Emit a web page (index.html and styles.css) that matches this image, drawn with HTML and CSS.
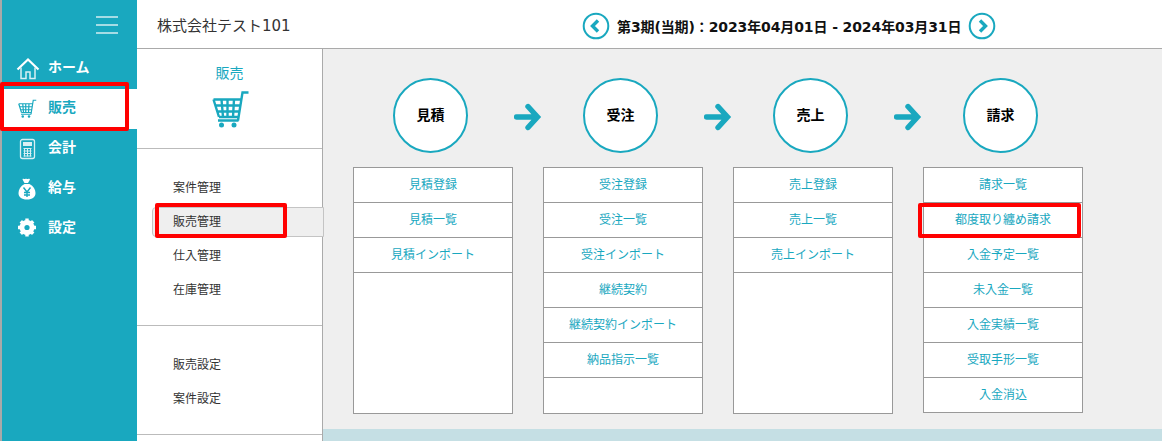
FILE: index.html
```html
<!DOCTYPE html>
<html lang="ja">
<head>
<meta charset="utf-8">
<title>販売</title>
<link rel="stylesheet" href="styles.css">
</head>
<body>
<div class="app">
  <aside class="sidebar">
    <div class="burger"><span></span><span></span><span></span></div>
    <nav class="mainnav">
      <a class="mainitem">
        <svg class="mi" viewBox="0 0 24 24" width="24" height="24"><path d="M1.500 12.500 12 2.500l10.500 10" fill="none" stroke="#fff" stroke-width="2.200"/><path d="M5 10.500V21.500h5v-6.500h4v6.500h5V10.500" fill="none" stroke="#d9f0f4" stroke-width="1.500"/></svg>
        <span>ホーム</span>
      </a>
      <a class="mainitem active">
        <svg class="mi" viewBox="-4 -4 48 48" width="24" height="24"><path d="M1.500 9.500h28M3 15.500h25.500M4.500 21.500h23M7 27h19.500M9.500 9.500l1.500 17.500M15.500 9.500V27M22 9.500 21 27M1.500 9.500 7 27M26.500 30.500H6M26 30.500 30.500 2.500h6" fill="none" stroke="#19a8bf" stroke-width="2.400"/><circle cx="9.500" cy="35" r="2.500" fill="#19a8bf"/><circle cx="22" cy="35" r="2.500" fill="#19a8bf"/></svg>
        <span>販売</span>
      </a>
      <a class="mainitem">
        <svg class="mi" viewBox="0 0 24 24" width="24" height="24"><rect x="4.500" y="2.500" width="14" height="19" rx="2" fill="none" stroke="#d9f0f4" stroke-width="1.300"/><rect x="7" y="5" width="9" height="4" fill="#d9f0f4"/><path d="M7.500 11.500h8M7.500 14h8M7.500 16.500h8M7.500 19h8M8.500 11v8.500M11.500 11v8.500M14.500 11v8.500" stroke="#d9f0f4" stroke-width="1"/></svg>
        <span>会計</span>
      </a>
      <a class="mainitem">
        <svg class="mi" viewBox="0 0 24 24" width="24" height="24"><g transform="translate(-1 0)"><path d="M8 1.500c1 .8 2 .8 3 0 1 .8 2 .8 3 0l1 1-2 3.500h-3.500L7.500 2.500ZM9.500 7h5c4 2 6 5.500 6 9 0 4-3 6.500-8.500 6.500S3.500 20 3.500 16c0-3.500 2-7 6-9Z" fill="#fff"/><path d="m8.500 10.500 3.500 4.500 3.500-4.500M12 15v5M9 15.500h6M9 18h6" fill="none" stroke="#19a8bf" stroke-width="1.400"/></g></svg>
        <span>給与</span>
      </a>
      <a class="mainitem">
        <svg class="mi" viewBox="0 0 24 24" width="24" height="24"><g transform="translate(-1 -1.500)"><circle cx="12" cy="12" r="5.500" fill="none" stroke="#fff" stroke-width="4"/><path d="M12 3v18M3 12h18M5.800 5.800l12.400 12.400M18.200 5.800 5.800 18.200" stroke="#fff" stroke-width="3.400"/><circle cx="12" cy="12" r="2.600" fill="#19a8bf"/></g></svg>
        <span>設定</span>
      </a>
    </nav>
  </aside>
  <div class="content">
    <header class="topbar">
      <div class="company">株式会社テスト101</div>
      <div class="period">
        <svg viewBox="0 0 28 28" width="28" height="28"><circle cx="14" cy="14" r="12.300" fill="none" stroke="#19a8bf" stroke-width="2"/><path d="M16 8.500 10.500 14l5.500 5.500" fill="none" stroke="#19a8bf" stroke-width="3.400"/></svg>
        <span class="period-text">第3期(当期)：2023年04月01日 - 2024年03月31日</span>
        <svg viewBox="0 0 28 28" width="28" height="28"><circle cx="14" cy="14" r="12.300" fill="none" stroke="#19a8bf" stroke-width="2"/><path d="m12 8.500 5.500 5.500-5.500 5.500" fill="none" stroke="#19a8bf" stroke-width="3.400"/></svg>
      </div>
    </header>
    <div class="body">
      <section class="subnav">
        <div class="subhead">
          <div class="subtitle">販売</div>
          <svg viewBox="0 0 38 38" width="38" height="38"><path d="M1.500 9.500h28M3 15.500h25.500M4.500 21.500h23M7 27h19.500M9.500 9.500l1.500 17.500M15.500 9.500V27M22 9.500 21 27M1.500 9.500 7 27M26.500 30.500H6M26 30.500 30.500 2.500h6" fill="none" stroke="#19a8bf" stroke-width="2.400"/><circle cx="9.500" cy="35" r="2.500" fill="#19a8bf"/><circle cx="22" cy="35" r="2.500" fill="#19a8bf"/></svg>
        </div>
        <ul class="sublist first">
          <li>案件管理</li>
          <li class="current">販売管理</li>
          <li>仕入管理</li>
          <li>在庫管理</li>
        </ul>
        <ul class="sublist second">
          <li>販売設定</li>
          <li>案件設定</li>
        </ul>
      </section>
      <main class="flow">
        <div class="columns">
          <div class="col">
            <div class="step-row"><div class="circle">見積</div><svg class="arrow" viewBox="0 0 28 28" width="28" height="28"><path d="M2.500 14h20M14 3.500 23.500 14 14 24.500" fill="none" stroke="#19a8bf" stroke-width="5.400" stroke-linecap="round"/></svg></div>
            <ul class="links">
              <li>見積登録</li><li>見積一覧</li><li>見積インポート</li>
            </ul>
          </div>
          <div class="col">
            <div class="step-row"><div class="circle">受注</div><svg class="arrow" viewBox="0 0 28 28" width="28" height="28"><path d="M2.500 14h20M14 3.500 23.500 14 14 24.500" fill="none" stroke="#19a8bf" stroke-width="5.400" stroke-linecap="round"/></svg></div>
            <ul class="links">
              <li>受注登録</li><li>受注一覧</li><li>受注インポート</li><li>継続契約</li><li>継続契約インポート</li><li>納品指示一覧</li>
            </ul>
          </div>
          <div class="col">
            <div class="step-row"><div class="circle">売上</div><svg class="arrow" viewBox="0 0 28 28" width="28" height="28"><path d="M2.500 14h20M14 3.500 23.500 14 14 24.500" fill="none" stroke="#19a8bf" stroke-width="5.400" stroke-linecap="round"/></svg></div>
            <ul class="links">
              <li>売上登録</li><li>売上一覧</li><li>売上インポート</li>
            </ul>
          </div>
          <div class="col">
            <div class="step-row"><div class="circle">請求</div></div>
            <ul class="links">
              <li>請求一覧</li><li>都度取り纏め請求</li><li>入金予定一覧</li><li>未入金一覧</li><li>入金実績一覧</li><li>受取手形一覧</li><li>入金消込</li>
            </ul>
          </div>
        </div>
        <div class="band"></div>
      </main>
    </div>
  </div>
  <div class="marker m-side"></div>
  <div class="marker m-sub"></div>
  <div class="marker m-link"></div>
</div>
</body>
</html>
```
FILE: styles.css
```css
* { box-sizing: border-box; }
html, body { margin: 0; padding: 0; height: 100%; overflow: hidden; }
body { font-family: "DejaVu Sans", "Noto Sans CJK JP", sans-serif; background: #fff; color: #333; }
ul { list-style: none; margin: 0; padding: 0; }

.app { position: relative; display: flex; width: 1162px; height: 441px; overflow: hidden; }

.sidebar { width: 137px; flex: none; background: #19a8bf; border-left: 2px solid #a9a9a9; }
.burger { display: flex; flex-direction: column; gap: 6px; align-items: flex-end; height: 49px; padding: 16px 19px 0 0; }
.burger span { display: block; width: 22px; height: 2px; background: #a5dce5; }
.mainitem { display: flex; align-items: center; height: 40px; padding-left: 14px; gap: 8px; color: #fff; font-size: 14px; font-weight: 700; }
.mainitem span { margin-bottom: 6px; }
.mainitem .mi { flex: none; }
.mainitem.active { background: #fff; color: #19a8bf; }

.content { flex: 1; display: flex; flex-direction: column; min-width: 0; }
.topbar { display: flex; align-items: center; height: 49px; flex: none; padding-left: 20px; border-bottom: 1px solid #aaa; }
.company { width: 425px; font-size: 15px; color: #333; }
.period { display: flex; align-items: center; gap: 7px; padding-top: 3px; }
.period-text { font-size: 14px; font-weight: 700; color: #111; white-space: nowrap; letter-spacing: -0.11px; }

.body { flex: 1; display: flex; min-height: 0; }
.subnav { width: 186px; flex: none; background: #fff; border-right: 1px solid #aaa; position: relative; }
.subhead { display: flex; flex-direction: column; align-items: center; height: 100px; padding-top: 15px; border-bottom: 1px solid #bbb; }
.subtitle { font-size: 14px; line-height: 18px; color: #19a8bf; margin-bottom: 8px; }
.subhead svg { margin-left: 2px; }
.sublist { font-size: 12px; color: #333; border-bottom: 1px solid #bbb; }
.sublist li { height: 34px; line-height: 34px; padding-left: 36px; }
.sublist.first { height: 177px; padding-top: 22px; }
.sublist.second { height: 109px; padding-top: 22px; }
.sublist li.current { height: 30px; line-height: 28px; margin: 2px -2px 2px 15px; padding-left: 20px; background: #efefef; border: 1px solid #c4c4c4; border-radius: 4px 0 0 4px; position: relative; }

.flow { flex: 1; display: flex; flex-direction: column; background: #efefef; min-width: 0; }
.columns { flex: 1; display: flex; gap: 30px; padding: 29px 0 0 30px; }
.col { width: 160px; flex: none; }
.step-row { position: relative; height: 89px; display: flex; justify-content: center; padding-right: 5px; align-items: flex-start; }
.circle { width: 75px; height: 75px; padding-bottom: 3px; border: 2px solid #19a8bf; border-radius: 50%; background: #fff; display: flex; align-items: center; justify-content: center; font-size: 14px; font-weight: 700; color: #000; }
.arrow { position: absolute; left: 161px; top: 25px; }
.links { height: 247px; background: #fff; border: 1px solid #999; }
.links li { height: 35px; line-height: 35px; border-bottom: 1px solid #999; text-align: center; font-size: 12px; color: #19a8bf; }
.col:last-child .links { height: 246px; }
.col:last-child .links li:last-child { border-bottom: none; }
.band { height: 12px; flex: none; background: #c5dfe4; }

.marker { position: absolute; border: 4px solid #f00; border-radius: 2px; pointer-events: none; }
.m-side { left: 0; top: 82px; width: 129px; height: 49px; }
.m-sub { left: 155px; top: 203px; width: 132px; height: 35px; }
.m-link { left: 918px; top: 203px; width: 163px; height: 35px; }
```
